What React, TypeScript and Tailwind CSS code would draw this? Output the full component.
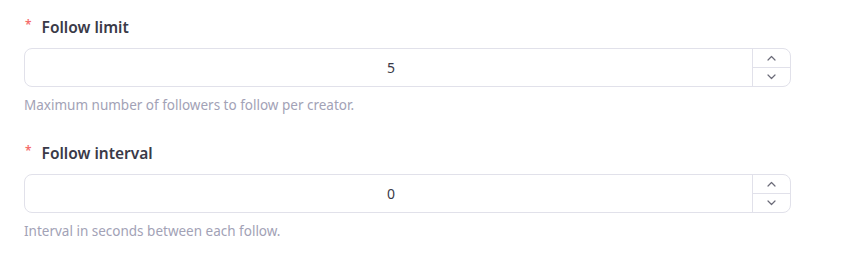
import React from 'react';

interface NumberFieldProps {
  label: string;
  value: number;
  help: string;
}

const Chevron = ({ up }: { up?: boolean }) => (
  <svg width="9" height="6" viewBox="0 0 9 6" fill="none" className="text-[#6b6b78]">
    <path
      d={up ? 'M1 5L4.5 1.5L8 5' : 'M1 1L4.5 4.5L8 1'}
      stroke="currentColor"
      strokeWidth="1.2"
      strokeLinecap="round"
      strokeLinejoin="round"
    />
  </svg>
);

const NumberField: React.FC<NumberFieldProps> = ({ label, value, help }) => {
  return (
    <div className="flex flex-col">
      <div className="flex items-center h-5 text-[15.5px] leading-5 font-semibold text-[#3a3a48]">
        <span className="text-[#f56c6c] text-[12px] mr-[10px] ml-[1px] relative top-[-2px]">*</span>
        {label}
      </div>
      <div className="mt-[11px] flex h-[39px] w-[767px] rounded-lg border border-[#e1e1ea] bg-white overflow-hidden">
        <div className="flex-1 flex items-center justify-center pl-[5px] text-[14px] text-[#3a3a48]">{value}</div>
        <div className="w-[38px] flex flex-col border-l border-[#e1e1ea]">
          <div className="flex-1 flex items-center justify-center border-b border-[#e1e1ea]">
            <Chevron up />
          </div>
          <div className="flex-1 flex items-center justify-center">
            <Chevron />
          </div>
        </div>
      </div>
      <div className="mt-[10px] h-4 text-[13.5px] leading-4 text-[#a2a2b6]">{help}</div>
    </div>
  );
};

export default function App() {
  return (
    <div className="w-[849px] h-[257px] bg-white px-6 pt-[17px] flex flex-col gap-[30px] font-['Noto_Sans',sans-serif]">
      <NumberField label="Follow limit" value={5} help="Maximum number of followers to follow per creator." />
      <NumberField label="Follow interval" value={0} help="Interval in seconds between each follow." />
    </div>
  );
}
